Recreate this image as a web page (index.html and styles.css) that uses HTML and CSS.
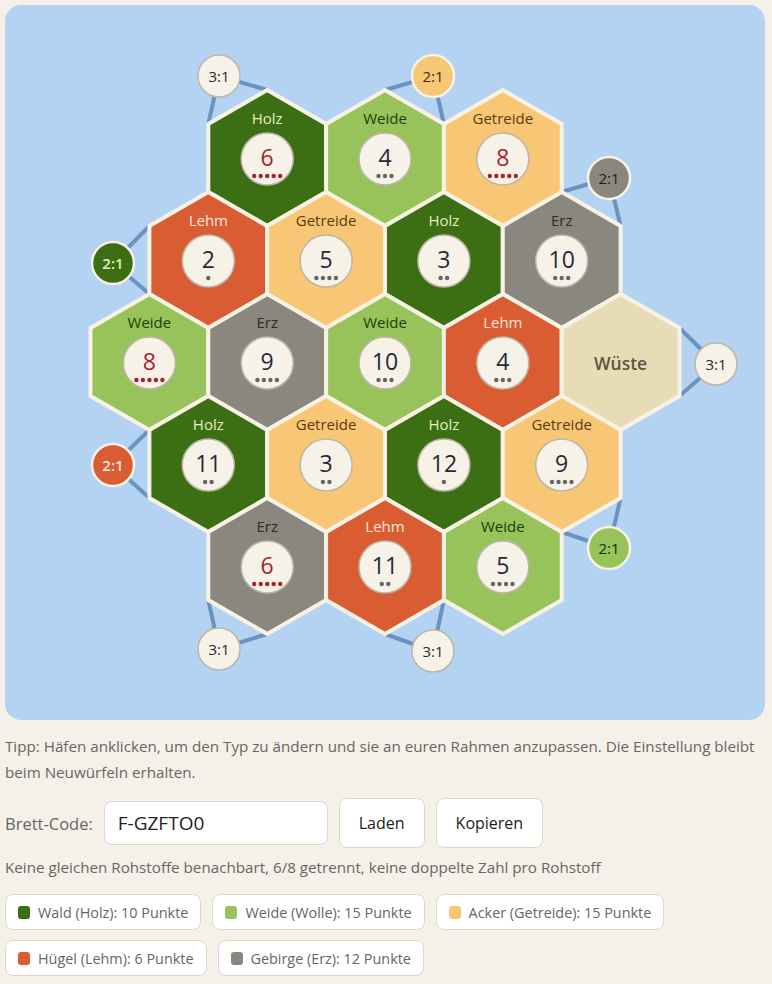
FILE: index.html
```html
<!DOCTYPE html>
<html lang="de">
<head>
    <meta charset="UTF-8">
    <title>Catan Brett</title>
    <link rel="stylesheet" href="styles.css">
</head>
<body>
<div id="board">
    <svg id="map" width="760" height="715" viewBox="5 5 760 715"></svg>
</div>
<p class="tip">Tipp: Häfen anklicken, um den Typ zu ändern und sie an euren Rahmen anzupassen. Die Einstellung bleibt beim Neuwürfeln erhalten.</p>
<div class="code-row">
    <label for="code">Brett-Code:</label>
    <input id="code" type="text" value="F-GZFTO0">
    <button>Laden</button>
    <button>Kopieren</button>
</div>
<p class="rules">Keine gleichen Rohstoffe benachbart, 6/8 getrennt, keine doppelte Zahl pro Rohstoff</p>
<ul class="legend">
    <li><span class="sw holz"></span>Wald (Holz): 10 Punkte</li>
    <li><span class="sw weide"></span>Weide (Wolle): 15 Punkte</li>
    <li><span class="sw getreide"></span>Acker (Getreide): 15 Punkte</li>
    <li><span class="sw lehm"></span>Hügel (Lehm): 6 Punkte</li>
    <li><span class="sw erz"></span>Gebirge (Erz): 12 Punkte</li>
</ul>
<script>
    var R = 68, W = 117.8, X0 = 385, Y0 = 362;
    var NS = 'http://www.w3.org/2000/svg';
    var svg = document.getElementById('map');
    var TYPES = {Holz: 'holz', Weide: 'weide', Getreide: 'getreide', Lehm: 'lehm', Erz: 'erz', 'Wüste': 'wueste'};
    var PIPS = {2: 1, 3: 2, 4: 3, 5: 4, 6: 5, 8: 5, 9: 4, 10: 3, 11: 2, 12: 1};

    // Reihen von oben nach unten
    var rows = [
        [['Holz', 6], ['Weide', 4], ['Getreide', 8]],
        [['Lehm', 2], ['Getreide', 5], ['Holz', 3], ['Erz', 10]],
        [['Weide', 8], ['Erz', 9], ['Weide', 10], ['Lehm', 4], ['Wüste', 0]],
        [['Holz', 11], ['Getreide', 3], ['Holz', 12], ['Getreide', 9]],
        [['Erz', 6], ['Lehm', 11], ['Weide', 5]]
    ];

    // text, typ, x, y, reihe, spalte, ecken
    var ports = [
        ['3:1', 'any', 219, 76, 0, 0, [0, 5]],
        ['2:1', 'getreide', 433, 76, 0, 1, [0, 1]],
        ['2:1', 'erz', 609, 178, 1, 3, [0, 1]],
        ['2:1', 'holz', 113, 263, 1, 0, [5, 4]],
        ['3:1', 'any', 716, 364, 2, 4, [1, 2]],
        ['2:1', 'lehm', 113, 465, 3, 0, [5, 4]],
        ['2:1', 'weide', 609, 548, 3, 3, [2, 3]],
        ['3:1', 'any', 219, 649, 4, 0, [4, 3]],
        ['3:1', 'any', 433, 651, 4, 1, [3, 2]]
    ];

    function el(tag, attrs, parent) {
        var e = document.createElementNS(NS, tag);
        for (var k in attrs) e.setAttribute(k, attrs[k]);
        (parent || svg).appendChild(e);
        return e;
    }
    function center(r, c) {
        var n = rows[r].length;
        return [X0 - W * (n - 1) / 2 + W * c, Y0 + 1.5 * R * (r - 2)];
    }
    function corner(p, k) {
        var a = Math.PI / 180 * (60 * k - 90);
        return [p[0] + R * Math.cos(a), p[1] + R * Math.sin(a)];
    }

    var gLines = el('g', {'class': 'port-lines'});
    var gHex = el('g', {});
    var gPorts = el('g', {});

    ports.forEach(function (p) {
        var c = center(p[4], p[5]);
        p[6].forEach(function (k) {
            var v = corner(c, k);
            el('line', {x1: p[2], y1: p[3], x2: v[0].toFixed(1), y2: v[1].toFixed(1)}, gLines);
        });
        var g = el('g', {'class': 'port ' + p[1]}, gPorts);
        el('circle', {cx: p[2], cy: p[3], r: 21}, g);
        el('text', {x: p[2], y: p[3] + 5.5}, g).textContent = p[0];
    });

    rows.forEach(function (row, r) {
        row.forEach(function (tile, c) {
            var p = center(r, c);
            var pts = [];
            for (var k = 0; k < 6; k++) {
                var v = corner(p, k);
                pts.push(v[0].toFixed(1) + ',' + v[1].toFixed(1));
            }
            var g = el('g', {'class': 'tile ' + TYPES[tile[0]]}, gHex);
            el('polygon', {points: pts.join(' ')}, g);
            if (!tile[1]) {
                el('text', {x: p[0], y: p[1] + 8, 'class': 'desert'}, g).textContent = tile[0];
                return;
            }
            el('text', {x: p[0], y: p[1] - 34, 'class': 'name'}, g).textContent = tile[0];
            var hot = tile[1] == 6 || tile[1] == 8 ? ' hot' : '';
            el('circle', {cx: p[0], cy: p[1] + 1, r: 26, 'class': 'chip'}, g);
            el('text', {x: p[0], y: p[1] + 8, 'class': 'num' + hot}, g).textContent = tile[1];
            var n = PIPS[tile[1]];
            for (var i = 0; i < n; i++) {
                el('circle', {cx: (p[0] + (i - (n - 1) / 2) * 6.5).toFixed(1), cy: p[1] + 18, r: 2.2, 'class': 'pip' + hot}, g);
            }
        });
    });
</script>
</body>
</html>
```

FILE: styles.css
```css
* {
    margin: 0;
    padding: 0;
    box-sizing: border-box;
}
body {
    background: #f5f1e9;
    padding: 5px;
    font-family: "Open Sans", "Noto Sans", sans-serif;
    color: #666;
}
#board {
    width: 760px;
    height: 715px;
    background: #b4d3f2;
    border-radius: 16px;
    overflow: hidden;
}
#map {
    display: block;
}

/* Brett */
.port-lines line {
    stroke: #6b93c0;
    stroke-width: 4;
}
.tile polygon {
    stroke: #f7f2e4;
    stroke-width: 4;
}
.tile text {
    text-anchor: middle;
}
.name {
    font-size: 15px;
}
.holz polygon { fill: #3c6e13; }
.holz .name { fill: #e4eec0; }
.weide polygon { fill: #97c35a; }
.weide .name { fill: #223d0c; }
.getreide polygon { fill: #f8c775; }
.getreide .name { fill: #5b3a12; }
.lehm polygon { fill: #d95c32; }
.lehm .name { fill: #fde6dc; }
.erz polygon { fill: #8a877e; }
.erz .name { fill: #2b2b28; }
.wueste polygon { fill: #e8dcb6; }
.desert {
    font-size: 17.5px;
    font-weight: 600;
    fill: #5d5544;
}
.chip {
    fill: #f7f2e7;
    stroke: #bdb6a8;
    stroke-width: 1.5;
}
.num {
    font-size: 23px;
    font-weight: 500;
    fill: #1f2a38;
}
.num.hot {
    fill: #a8232c;
}
.pip {
    fill: #666;
}
.pip.hot {
    fill: #a8232c;
}

/* Häfen */
.port circle {
    stroke: #f7f2e4;
    stroke-width: 2.5;
}
.port text {
    font-size: 15px;
    font-weight: 500;
    text-anchor: middle;
}
.port.any circle { fill: #f7f2e7; stroke: #bdb6a8; stroke-width: 1.5; }
.port.any text { fill: #2a2a2a; }
.port.holz circle { fill: #3c6e13; }
.port.holz text { fill: #e4eec0; font-weight: 600; }
.port.weide circle { fill: #97c35a; }
.port.weide text { fill: #1c2a0c; }
.port.getreide circle { fill: #f8c775; }
.port.getreide text { fill: #3a2a10; }
.port.lehm circle { fill: #d95c32; }
.port.lehm text { fill: #fde6dc; font-weight: 600; }
.port.erz circle { fill: #8a877e; }
.port.erz text { fill: #1c1c1c; }

/* Unten */
.tip {
    margin-top: 13px;
    font-size: 15.2px;
    line-height: 26px;
}
.code-row {
    display: flex;
    align-items: center;
    gap: 11px;
    margin-top: 13px;
}
.code-row label {
    font-size: 16.5px;
}
.code-row input {
    width: 224px;
    height: 44px;
    padding: 0 13px;
    font: 19px "Open Sans", sans-serif;
    color: #222;
    background: #fff;
    border: 1px solid #ddd6ca;
    border-radius: 8px;
}
.code-row button {
    height: 50px;
    padding: 0 19px;
    font: 16px "Open Sans", sans-serif;
    color: #222;
    background: #fff;
    border: 1px solid #ddd6ca;
    border-radius: 8px;
}
.rules {
    margin-top: 6px;
    font-size: 15.2px;
    line-height: 26px;
}
.legend {
    list-style: none;
    display: flex;
    flex-wrap: wrap;
    gap: 10px 11px;
    margin-top: 14px;
    width: 680px;
}
.legend li {
    display: flex;
    align-items: center;
    gap: 8px;
    height: 36px;
    padding: 0 12px;
    font-size: 14.4px;
    background: #fff;
    border: 1px solid #ddd6ca;
    border-radius: 8px;
}
.sw {
    width: 12px;
    height: 13px;
    border-radius: 3px;
}
.sw.holz { background: #3c6e13; }
.sw.weide { background: #97c35a; }
.sw.getreide { background: #f8c775; }
.sw.lehm { background: #d95c32; }
.sw.erz { background: #8a877e; }
```
